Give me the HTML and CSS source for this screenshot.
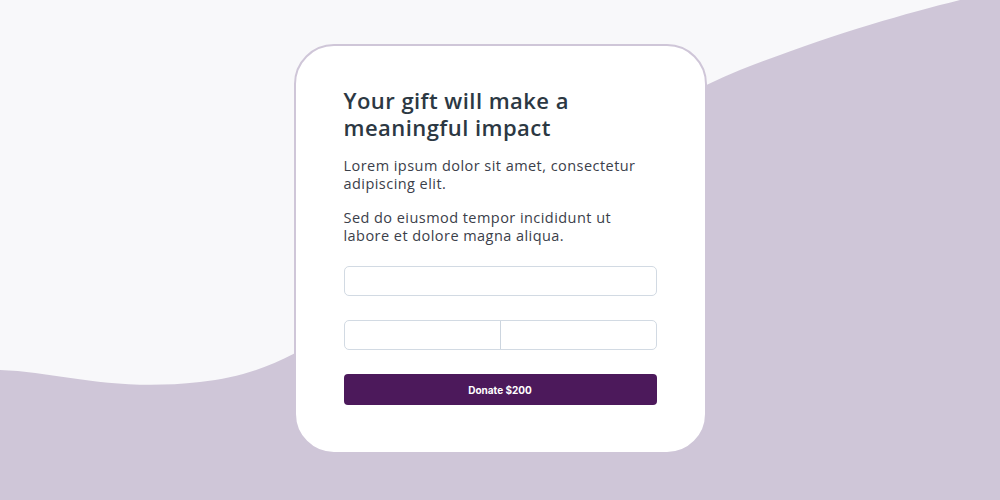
FILE: index.html
```html
<!DOCTYPE html>
<html>
<head>
<meta charset="utf-8">
<link rel="stylesheet" href="styles.css">
</head>
<body>
<svg class="wave" viewBox="0 0 1000 500" preserveAspectRatio="none" aria-hidden="true">
  <path d="M0 370 C 60 372, 110 392, 200 382 C 290 372, 330 330, 420 270 C 520 200, 620 120, 740 70 C 830 35, 900 15, 960 0 L1000 0 L1000 500 L0 500 Z" fill="#cfc6d8"/>
</svg>
<main class="page">
  <section class="card">
    <h1 class="title">Your gift will make a meaningful impact</h1>
    <p class="text">Lorem ipsum dolor sit amet, consectetur adipiscing elit.</p>
    <p class="text">Sed do eiusmod tempor incididunt ut labore et dolore magna aliqua.</p>
    <div class="fields">
      <div class="field"></div>
      <div class="field split">
        <div class="half"></div>
        <div class="half"></div>
      </div>
      <button class="donate">Donate $200</button>
    </div>
  </section>
</main>
</body>
</html>
```
FILE: styles.css
```css
html, body {
  margin: 0;
  padding: 0;
}
body {
  width: 1000px;
  height: 500px;
  background: #f8f8fa;
  position: relative;
  overflow: hidden;
  font-family: "Open Sans", Lato, sans-serif;
}
.wave {
  position: absolute;
  left: 0;
  top: 0;
  width: 1000px;
  height: 500px;
}
.page {
  position: relative;
  display: flex;
  justify-content: center;
  padding-top: 44px;
}
.card {
  box-sizing: border-box;
  width: 413px;
  height: 410px;
  background: #fff;
  border: 2px solid #cfc6d8;
  border-radius: 40px;
  padding: 41px 48px 0 48px;
  display: flex;
  flex-direction: column;
}
.title {
  margin: 0 0 16px 0;
  font-size: 22px;
  line-height: 27px;
  font-weight: 600;
  letter-spacing: 0.45px;
  color: #2c3843;
  width: 260px;
}
.text {
  margin: 0 0 16px 0;
  font-size: 14.5px;
  line-height: 18px;
  letter-spacing: 0.45px;
  color: #3b404a;
  width: 313px;
}
.fields {
  margin-top: 5px;
  display: flex;
  flex-direction: column;
  gap: 24px;
}
.field {
  box-sizing: border-box;
  height: 30px;
  border: 1.5px solid #d2dae3;
  border-radius: 5px;
}
.split {
  display: flex;
}
.half {
  flex: 1;
}
.half + .half {
  border-left: 1.5px solid #ccd5df;
}
.donate {
  height: 31px;
  border: none;
  border-radius: 4px;
  background: #4c195b;
  color: #fff;
  font-family: Inter, Roboto, sans-serif;
  font-weight: 700;
  font-size: 10px;
  padding: 0;
}
```
